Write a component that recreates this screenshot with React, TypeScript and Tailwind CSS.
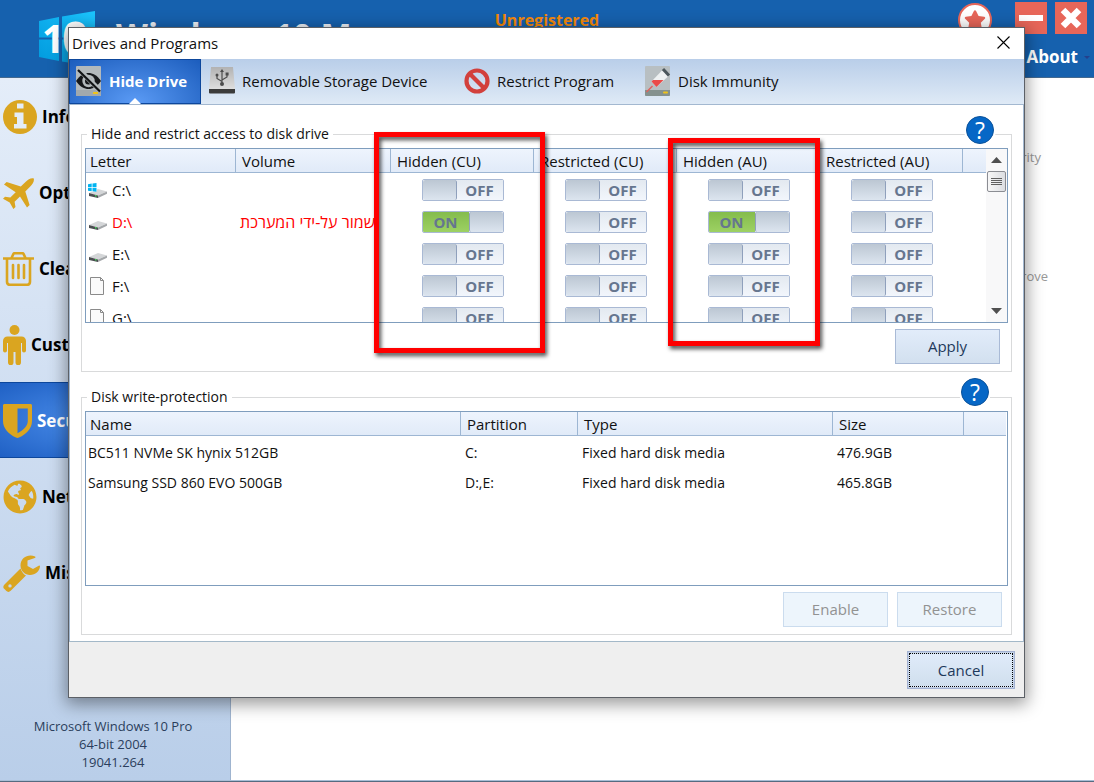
import React, { useState } from "react";
import { FaGlobeAmericas, FaStar } from "react-icons/fa";

function InfoIcon() {
  return (
    <svg width="34" height="34" viewBox="0 0 34 34" fill="currentColor">
      <circle cx="17" cy="17" r="17" />
      <path d="M14 3.500h6.500v5H14zM11.500 12.500h9v11.500h3v4.500H11V24h3v-7h-2.500z" fill="#e4edf8" />
    </svg>
  );
}

function PlaneIcon() {
  return (
    <svg width="31" height="31" viewBox="0 0 31 31" fill="currentColor">
      <path d="M30.800.4c.6 3-1 5.600-3.800 8.400L22.300 13.500 26.600 27l-2.600 2.600-7-11.200-5.400 5.400.9 5.200-2.100 2-3.700-6.500L0 20.800l2-2 5.300.8 5.400-5.400L1 6.600 3.600 4 17.800 8.600l4.700-4.600C25.200 1.300 28-.4 30.800.4z" />
    </svg>
  );
}

function TrashIcon() {
  return (
    <svg width="31" height="34" viewBox="0 0 31 34" fill="none" stroke="currentColor" strokeWidth="2.600">
      <path d="M0 6.500h31M8.500 6l2-4.200c.2-.4.6-.6 1-.6h8c.4 0 .8.2 1 .6l2 4.200" />
      <path d="M4 7v22.500c0 2 1.200 3.300 2.800 3.300h17.400c1.600 0 2.800-1.300 2.800-3.300V7" />
      <path d="M10 13v13M15.500 13v13M21 13v13" strokeLinecap="round" />
    </svg>
  );
}

function PersonIcon() {
  return (
    <svg width="23" height="40" viewBox="0 0 23 40" fill="currentColor">
      <circle cx="11.500" cy="5" r="5" />
      <path d="M4.500 11.500h14c2.600 0 4.500 1.900 4.500 4.500v9.500a2 2 0 0 1-4 0V18h-1v19.500a2.500 2.500 0 0 1-5.500 0V27h-2v10.500a2.500 2.500 0 0 1-5.500 0V18H4v7.500a2 2 0 0 1-4 0V16c0-2.600 1.900-4.500 4.500-4.500z" />
    </svg>
  );
}

function ShieldIcon() {
  return (
    <svg width="29" height="34" viewBox="0 0 29 34" fill="currentColor">
      <path
        fillRule="evenodd"
        d="M1.500 0h26c.9 0 1.500.6 1.500 1.500V17c0 7.500-5.500 13-13 16.600-1 .5-2 .5-3 0C5.500 30 0 24.500 0 17V1.500C0 .6.600 0 1.500 0zM14.500 4.500v24.800C20.500 26.200 24.800 22 24.800 17V4.500z"
      />
    </svg>
  );
}

function WrenchIcon() {
  return (
    <svg width="37" height="37" viewBox="0 0 37 37" fill="currentColor">
      <path
        fillRule="evenodd"
        d="M17.500 13.500L1.500 29.500c-1.600 1.600-1.600 3.200 0 4.600l1.600 1.700c1.500 1.500 3.100 1.500 4.600 0L23 20.500c-2.400-1.200-4.300-3.600-5.500-7zM7 29.200a1.700 1.700 0 1 0 0 3.400 1.700 1.700 0 0 0 0-3.400z"
      />
      <path d="M32 1.500C26-1.500 17.500 2 17.500 10.500c0 5.500 4.500 9.500 9.500 9.500 5.500 0 9.500-4 10-8.500.1-1-.6-1.200-1.300-.8L30 14l-5.500-3V5.500L31.800 3c.8-.4.9-1.100.2-1.500z" />
    </svg>
  );
}

const navItems = [
  { label: "Information", icon: <InfoIcon /> },
  { label: "Optimization", icon: <PlaneIcon /> },
  { label: "Cleaner", icon: <TrashIcon /> },
  { label: "Customization", icon: <PersonIcon /> },
  { label: "Security", icon: <ShieldIcon />, active: true },
  { label: "Network", icon: <FaGlobeAmericas size={34} /> },
  { label: "Misc. Utilities", icon: <WrenchIcon /> },
];

function Logo() {
  return (
    <svg width="57" height="52" viewBox="0 0 57 52" className="shrink-0">
      <defs>
        <linearGradient id="logo" x1="0" y1="1" x2="1" y2="0">
          <stop offset="0" stopColor="#0098dc" />
          <stop offset="1" stopColor="#1cc6ff" />
        </linearGradient>
      </defs>
      <path fill="url(#logo)" d="M0 10l20-4v20.500H0zM23 5.500L56 0v26.500H23zM0 28.500h20V50L0 46zM23 28.500h33V56l-33-5.500z" />
      <g fill="#fff" fontFamily="Open Sans, sans-serif" fontWeight="700">
        <text x="3" y="42" fontSize="39">
          1
        </text>
        <text x="23" y="44" fontSize="47">
          0
        </text>
      </g>
    </svg>
  );
}

function HiddenDriveIcon() {
  return (
    <svg width="26" height="30" viewBox="0 0 26 30">
      <rect width="25" height="30" rx="1" fill="#b3b9bc" />
      <path d="M0 24h25v5a1 1 0 0 1-1 1H1a1 1 0 0 1-1-1z" fill="#a1a9ad" />
      <rect x="17" y="26" width="5" height="2" fill="#f0c419" />
      <path d="M0 15C4 9 8.500 7 12.500 7S21 9 25 15c-4 6-8.500 8-12.500 8S4 21 0 15z" fill="#15171a" />
      <circle cx="12.500" cy="15" r="6.200" fill="#b3b9bc" />
      <circle cx="12.500" cy="15" r="3.500" fill="#15171a" />
      <path d="M2.500 3l21 21" stroke="#b3b9bc" strokeWidth="5" />
      <path d="M2 4l22 21.500" stroke="#101214" strokeWidth="2.200" />
    </svg>
  );
}

function UsbDriveIcon() {
  return (
    <svg width="26" height="30" viewBox="0 0 26 30">
      <defs>
        <linearGradient id="usb" x1="0" y1="0" x2="0" y2="1">
          <stop offset="0" stopColor="#b2b2b2" />
          <stop offset="1" stopColor="#dedede" />
        </linearGradient>
      </defs>
      <path d="M2 1h22l2 22H0z" fill="url(#usb)" />
      <path d="M0 23h26v3.500a1 1 0 0 1-1 1H1a1 1 0 0 1-1-1z" fill="#3b3b3b" />
      <g stroke="#4c4c4c" strokeWidth="1.200" fill="none">
        <path d="M13 5v13M13 15.500l-5-3V9M13 14l5-3V8" />
      </g>
      <g fill="#4c4c4c">
        <path d="M13 3l2 3h-4z" />
        <circle cx="13" cy="18" r="2" />
        <circle cx="8" cy="9" r="1.500" />
        <rect x="16.600" y="6.500" width="3" height="3" />
      </g>
    </svg>
  );
}

function ProhibitIcon() {
  return (
    <svg width="26" height="30" viewBox="0 0 26 30" fill="none" stroke="#d2403c" strokeWidth="4.200">
      <circle cx="13" cy="15" r="10.500" />
      <path d="M5.500 7.500l15 15" />
    </svg>
  );
}

function SyringeDriveIcon() {
  return (
    <svg width="26" height="30" viewBox="0 0 26 30">
      <rect width="25" height="30" rx="1" fill="#b8bfc2" />
      <path d="M0 24h25v5a1 1 0 0 1-1 1H1a1 1 0 0 1-1-1z" fill="#84918f" />
      <rect x="18" y="25.500" width="5" height="2" rx="1" fill="#f0c419" />
      <path d="M1.500 26l6-6" stroke="#e0625d" strokeWidth="1.500" />
      <path d="M6.500 15.500L17 4.500l6 6-11.500 10.500z" fill="#eef1f2" />
      <path d="M6.500 15.500l1.500-1.500h10.500L11.500 21z" fill="#ea4a48" />
      <path d="M18 3l6 6.500" stroke="#4b565b" strokeWidth="3" />
    </svg>
  );
}

function DriveIcon({ system }: { system?: boolean }) {
  return (
    <svg width="20" height="20" viewBox="0 0 20 20" className="shrink-0">
      <path d="M1 13l9-4 9 2.500-9 4z" fill="#d4d6d8" />
      <path d="M1 13l9 2.500V18l-9-2z" fill="#4a4d50" />
      <path d="M10 15.500l9-4v2.200L10 18z" fill="#a4a7aa" />
      <rect x="7" y="15" width="1.500" height="1.500" fill="#41d158" />
      {system && (
        <g>
          <path d="M0 3h9v8.500H0z" fill="#fff" />
          <path d="M0 4.200l3.700-.6v3.600H0zM4.500 3.500L8.500 3v4.200h-4zM0 8h3.700v3.200L0 10.800zM4.500 8h4v3.700l-4-.5z" fill="#00b4f1" />
        </g>
      )}
    </svg>
  );
}

function PageIcon() {
  return (
    <svg width="20" height="20" viewBox="0 0 20 20" stroke="#8a8a8a" className="shrink-0">
      <path d="M2.500 1.500h10l3 3v14h-13z" fill="#fafafa" />
      <path d="M12.500 1.500v3h3" fill="none" />
    </svg>
  );
}

function Toggle({ label, initial }: { label: string; initial: boolean }) {
  const [on, setOn] = useState(initial);
  return (
    <label className="relative mx-auto flex h-[22px] w-[82px] cursor-pointer overflow-hidden rounded-xs border border-[#a9b9d4] text-[15px] leading-5 font-bold text-[#66768f]">
      <input type="checkbox" role="switch" aria-label={label} checked={on} onChange={() => setOn(!on)} className="sr-only" />
      {on ? (
        <>
          <span className="flex-1 bg-linear-to-b from-[#84bc4c] to-[#9dd163] text-center">ON</span>
          <span className="w-[34px] rounded-xs border-l border-[#8fa0bc] bg-linear-to-b from-[#bcc7d3] to-[#dce5ef]" />
        </>
      ) : (
        <>
          <span className="w-[34px] rounded-xs border-r border-[#8fa0bc] bg-linear-to-b from-[#bcc7d3] to-[#dce5ef]" />
          <span className="flex-1 bg-linear-to-b from-[#e3e9f0] to-[#f2f6fc] text-center">OFF</span>
        </>
      )}
    </label>
  );
}

function HelpButton({ label, className }: { label: string; className: string }) {
  return (
    <button
      aria-label={label}
      className={`absolute size-7 rounded-full border border-[#0a5199] bg-[#0667c6] text-center text-[23px] leading-[26px] text-white ring-2 ring-white ${className}`}
    >
      ?
    </button>
  );
}

const driveColumns = ["Hidden (CU)", "Restricted (CU)", "Hidden (AU)", "Restricted (AU)"];
const drives = [
  { letter: "C:\\", kind: "system", volume: "", on: [false, false, false, false] },
  { letter: "D:\\", kind: "disk", volume: "שמור על-ידי המערכת", on: [true, false, true, false] },
  { letter: "E:\\", kind: "disk", volume: "", on: [false, false, false, false] },
  { letter: "F:\\", kind: "page", volume: "", on: [false, false, false, false] },
  { letter: "G:\\", kind: "page", volume: "", on: [false, false, false, false] },
];
const disks = [
  ["BC511 NVMe SK hynix 512GB", "C:", "Fixed hard disk media", "476.9GB"],
  ["Samsung SSD 860 EVO 500GB", "D:,E:", "Fixed hard disk media", "465.8GB"],
];
const tabs = [
  { label: "Hide Drive", icon: <HiddenDriveIcon />, width: "w-[132px]" },
  { label: "Removable Storage Device", icon: <UsbDriveIcon />, width: "w-[255px]" },
  { label: "Restrict Program", icon: <ProhibitIcon />, width: "w-[181px]" },
  { label: "Disk Immunity", icon: <SyringeDriveIcon />, width: "w-[160px]" },
];

const headRow = "h-6 bg-linear-to-b from-[#eef4fd] to-[#e0eaf8] text-left";
const headCell = "border-b border-[#9db6d3] p-0 font-normal";
const pushButton = "h-[35px] w-[105px] border border-[#a9bad6] bg-linear-to-b from-[#e2ecfa] to-[#d2e0ef] pb-[2px] text-[#1e395b]";
const disabledButton = "h-[35px] w-[105px] border border-[#cbdcee] bg-[#edf5fc] pb-[2px] text-[#929292]";

function Scrollbar() {
  return (
    <div className="flex w-[21px] shrink-0 flex-col items-center bg-[#f8f8f9] pt-2 pr-px pb-2" aria-hidden="true">
      <svg width="11" height="6" viewBox="0 0 11 6" fill="#505050">
        <path d="M0 6l5.500-6L11 6z" />
      </svg>
      <div className="mt-2 flex h-[21px] w-[19px] flex-col items-center justify-center gap-px rounded-xs border border-[#8b8d93] bg-linear-to-r from-[#f7f7f7] to-[#dcdee2]">
        <i className="h-px w-[11px] bg-[#606060]" />
        <i className="h-px w-[11px] bg-[#606060]" />
        <i className="h-px w-[11px] bg-[#606060]" />
        <i className="h-px w-[11px] bg-[#606060]" />
      </div>
      <svg width="11" height="6" viewBox="0 0 11 6" fill="#505050" className="mt-auto">
        <path d="M0 0l5.500 6L11 0z" />
      </svg>
    </div>
  );
}

function DriveDialog() {
  const [tab, setTab] = useState(0);
  return (
    <section
      role="dialog"
      aria-label="Drives and Programs"
      className="relative w-full border border-[#5c6066] bg-white text-[15px] text-[#111] shadow-[0_4px_16px_2px_rgba(0,0,0,0.4)]"
    >
      <header className="flex h-[31px] items-center justify-between pr-3.5 pb-[2px] pl-[3px]">
        <h2>Drives and Programs</h2>
        <button aria-label="Close dialog">
          <svg width="13" height="13" viewBox="0 0 13 13" stroke="#000" strokeWidth="1.100">
            <path d="M.5.5l12 12M12.500.5l-12 12" />
          </svg>
        </button>
      </header>
      <div role="tablist" className="flex h-[46px] border-b border-[#a3b8d0] bg-linear-to-b from-[#b9cee9] to-[#dfeaf6]">
        {tabs.map((t, i) => (
          <button
            key={t.label}
            role="tab"
            aria-selected={i === tab}
            onClick={() => setTab(i)}
            className={`relative flex items-center gap-[7px] pb-[2px] whitespace-nowrap ${t.width} ${
              i === tab
                ? "border border-[#0d479c] bg-[radial-gradient(ellipse_at_bottom,#5b9bf5,#1c5dbd)] pl-[6px] font-bold text-white"
                : "pl-2"
            }`}
          >
            {t.icon}
            {t.label}
            {i === tab && (
              <svg width="12" height="6" viewBox="0 0 12 6" fill="#fff" className="absolute -bottom-px left-[59px]">
                <path d="M0 6l6-6 6 6z" />
              </svg>
            )}
          </button>
        ))}
      </div>

      <div className="border-x border-[#a3b8d0] px-[11px] pt-[17px] pb-[6px]">
        <fieldset className="relative border border-[#d9dadb] px-[3px] pb-[7px]">
          <legend className="ml-[2px] px-1 text-[14px] leading-6">Hide and restrict access to disk drive</legend>
          <HelpButton label="Help on drive access" className="-top-[30px] right-[17px]" />
          <div className="mt-[2px] flex h-[175px] overflow-hidden border border-[#7f9dbd]">
            <table className="w-full flex-1 table-fixed border-separate border-spacing-0 self-start">
              <thead>
                <tr className={headRow}>
                  <th className={`${headCell} w-[150px] border-r pl-1`}>Letter</th>
                  <th className={`${headCell} w-[155px] border-r pl-1.5`}>Volume</th>
                  {driveColumns.map((c) => (
                    <th key={c} className={`${headCell} w-[143px] border-r pl-1.5`}>
                      {c}
                    </th>
                  ))}
                  <th aria-label="Spare" className={headCell} />
                </tr>
              </thead>
              <tbody>
                <tr aria-hidden="true" className="h-px" />
                {drives.map((d) => (
                  <tr key={d.letter} className={`h-8 ${d.volume ? "text-[#f00]" : ""}`}>
                    <td className="p-0 pl-[2px]">
                      <span className="flex items-center gap-1">
                        {d.kind === "page" ? <PageIcon /> : <DriveIcon system={d.kind === "system"} />}
                        {d.letter}
                      </span>
                    </td>
                    <td className="p-0 pl-1 text-left text-[16px] whitespace-nowrap">{d.volume}</td>
                    {d.on.map((on, i) => (
                      <td key={driveColumns[i]} className="p-0">
                        <Toggle label={`${driveColumns[i]} ${d.letter}`} initial={on} />
                      </td>
                    ))}
                    <td />
                  </tr>
                ))}
              </tbody>
            </table>
            <Scrollbar />
          </div>
          <div className="mt-1.5 flex justify-end pr-2">
            <button className={pushButton}>Apply</button>
          </div>
        </fieldset>

        <fieldset className="relative mt-[13px] border border-[#d9dadb] px-[3px] pb-[7px]">
          <legend className="ml-[2px] px-1 text-[14px] leading-6">Disk write-protection</legend>
          <HelpButton label="Help on write protection" className="-top-[31px] right-[22px]" />
          <div className="mt-[2px] h-[175px] overflow-hidden border border-[#7f9dbd] pr-px">
            <table className="w-full table-fixed border-separate border-spacing-0">
              <thead>
                <tr className={headRow}>
                  <th className={`${headCell} w-[375px] border-r pl-1`}>Name</th>
                  <th className={`${headCell} w-[117px] border-r pl-1.5`}>Partition</th>
                  <th className={`${headCell} w-[255px] border-r pl-1.5`}>Type</th>
                  <th className={`${headCell} w-[131px] border-r pl-1.5`}>Size</th>
                  <th aria-label="Spare" className={headCell} />
                </tr>
              </thead>
              <tbody>
                <tr aria-hidden="true" className="h-[2px]" />
                {disks.map((row) => (
                  <tr key={row[0]} className="h-[30px] text-[14px]">
                    {row.map((cell, i) => (
                      <td key={i} className={i === 0 ? "p-0 pl-[2px]" : "p-0 pl-1"}>
                        {cell}
                      </td>
                    ))}
                    <td />
                  </tr>
                ))}
              </tbody>
            </table>
          </div>
          <div className="mt-1.5 flex justify-end gap-[9px] pr-1.5">
            <button disabled className={disabledButton}>Enable</button>
            <button disabled className={disabledButton}>Restore</button>
          </div>
        </fieldset>
      </div>

      <footer className="flex justify-end border-t border-[#a3b8c8] bg-[#efefef] pt-[9px] pr-[9px] pb-2">
        <button className="h-[38px] w-[108px] border border-[#a3b2d2] bg-[#c3d1e6] p-px text-[#1e395b]">
          <span className="flex h-full items-center justify-center border border-dotted border-black bg-linear-to-b from-[#e0ebfa] to-[#d0dfed]">
            Cancel
          </span>
        </button>
      </footer>

      <div className="pointer-events-none absolute top-[104px] left-[305px] h-[221px] w-[171px] border-[5px] border-[#f00] drop-shadow-[2px_3px_2px_rgba(0,0,0,0.7)]" />
      <div className="pointer-events-none absolute top-[110px] left-[599px] h-[208px] w-[152px] border-[5px] border-[#f00] drop-shadow-[2px_3px_2px_rgba(0,0,0,0.7)]" />
    </section>
  );
}

export default function App() {
  return (
    <div className="relative flex min-h-screen flex-col overflow-hidden border-b border-[#566b80] bg-white font-['Open_Sans','Noto_Sans',sans-serif] text-[15px] leading-5">
      <header className="relative flex h-[78px] items-start border-b border-[#44698f] bg-[#1661ae] pl-[39px] text-white">
        <div className="flex items-start gap-5 pt-[11px]">
          <Logo />
          <h1 className="mt-1 text-[33px] leading-10 font-bold whitespace-nowrap text-[#eef2f7]">Windows 10 Manager</h1>
        </div>
        <p className="absolute inset-x-0 top-2.5 text-center text-[16px] leading-5 font-bold text-[#f5890a]">Unregistered</p>
        <div className="absolute top-[2px] right-[7px] flex gap-2">
          <button aria-label="Register" className="mr-[15px] mt-px grid size-[34px] place-items-center rounded-full border-2 border-[#e76659] bg-white text-[#e76659]">
            <FaStar size={22} />
          </button>
          <button aria-label="Minimize" className="flex size-8 justify-center bg-[#e76659] pt-[13px]">
            <span className="h-[6px] w-6 bg-white" />
          </button>
          <button aria-label="Close" className="grid size-8 place-items-center bg-[#e76659]">
            <svg width="22" height="22" viewBox="0 0 22 22" stroke="#fff" strokeWidth="6.500">
              <path d="M3 3l16 16M19 3L3 19" />
            </svg>
          </button>
        </div>
        <button className="absolute top-[47px] right-1 flex items-center gap-1.5 text-[17px] font-bold">
          About
          <svg width="6" height="3" viewBox="0 0 6 3" fill="#24408c">
            <path d="M0 0h6L3 3z" />
          </svg>
        </button>
      </header>

      <div className="flex flex-1 border-b border-[#a9bed6]">
        <aside className="flex w-[231px] shrink-0 flex-col border-r border-[#9fb4cf] bg-linear-to-b from-[#e4edf9] to-[#b9cee9]">
          <nav>
            {navItems.map((n) => (
              <a
                key={n.label}
                href="#"
                className={`flex h-[76px] items-center gap-[5px] border-y pt-[2px] pl-[3px] text-[17px] font-bold whitespace-nowrap ${
                  n.active
                    ? "border-[#0d479c] bg-[radial-gradient(ellipse_at_center,#5093ef,#1f60c4)] text-white"
                    : "border-transparent text-black"
                }`}
              >
                <span className="text-[#daa520]">{n.icon}</span>
                {n.label}
              </a>
            ))}
          </nav>
          <p className="mt-auto pr-1 pb-[9px] text-center text-[13px] leading-[18px] text-[#2b3e5c]">
            Microsoft Windows 10 Pro
            <br />
            64-bit 2004
            <br />
            19041.264
          </p>
        </aside>
        <main className="flex-1 text-right text-[13px] text-[#999]">
          <p className="pt-[69px] pr-[53px]">Security</p>
          <p className="pt-[99px] pr-[46px]">Improve</p>
        </main>
      </div>

      <div className="absolute inset-0 pt-[27px] pr-[69px] pl-[68px]">
        <DriveDialog />
      </div>
    </div>
  );
}
